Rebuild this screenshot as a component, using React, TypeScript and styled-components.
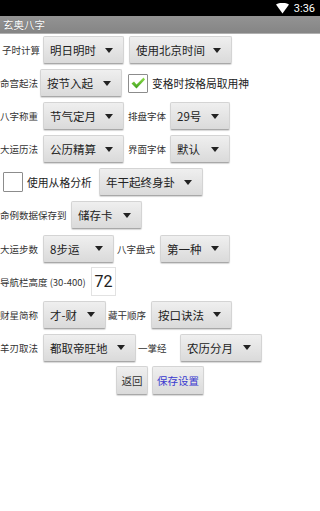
import React from "react";
import styled, { createGlobalStyle } from "styled-components";

const Global = createGlobalStyle`
  html, body { margin: 0; padding: 0; background: #fff; }
  body { font-family: Roboto, "Noto Sans CJK SC", "Noto Sans", sans-serif; width: 320px; height: 511px; overflow: hidden; }
`;

const Screen = styled.div`
  width: 320px;
  height: 511px;
  display: flex;
  flex-direction: column;
  background: #fff;
`;

const StatusBar = styled.div`
  height: 16px;
  background: #000;
  display: flex;
  align-items: center;
  justify-content: flex-end;
  gap: 5px;
  padding-right: 5px;
  color: #fff;
  font-size: 11px;
  font-family: Roboto, sans-serif;
`;

const TitleBar = styled.div`
  height: 17px;
  background: linear-gradient(#939393, #858585);
  color: #fff;
  font-size: 10.5px;
  line-height: 17px;
  padding-left: 3px;
  font-family: "Noto Sans CJK SC", sans-serif;
  text-shadow: 0 0 1px rgba(0,0,0,0.4);
  border-bottom: 1px solid #b0b0b0;
`;

const Content = styled.div`
  display: flex;
  flex-direction: column;
  gap: 5.1px;
  padding-top: 2px;
`;

const Row = styled.div<{ $center?: boolean }>`
  height: 28px;
  display: flex;
  align-items: center;
  justify-content: ${(p) => (p.$center ? "center" : "flex-start")};
  gap: ${(p) => (p.$center ? "4px" : "0")};
`;

const Label = styled.span<{ $w: number; $ml?: number }>`
  width: ${(p) => p.$w}px;
  margin-left: ${(p) => p.$ml ?? 0}px;
  flex: none;
  font-size: 9.5px;
  color: #333;
  white-space: nowrap;
  font-family: "Noto Sans CJK SC", sans-serif;
`;

const CheckText = styled.span<{ $w?: number; $ml?: number }>`
  width: ${(p) => (p.$w ? `${p.$w}px` : "auto")};
  margin-left: ${(p) => p.$ml ?? 0}px;
  flex: none;
  font-size: 10.8px;
  color: #222;
  white-space: nowrap;
  font-family: "Noto Sans CJK SC", sans-serif;
`;

const SpinnerBox = styled.div<{ $w: number; $ml?: number }>`
  width: ${(p) => p.$w}px;
  margin-left: ${(p) => p.$ml ?? 0}px;
  height: 28px;
  box-sizing: border-box;
  flex: none;
  display: flex;
  align-items: center;
  justify-content: space-between;
  padding: 0 10px 0 6px;
  background: linear-gradient(#efefef, #dadada);
  border: 1px solid #d4d4d4;
  border-bottom-color: #a8a8a8;
  border-radius: 2px;
  box-shadow: 0 1px 1px rgba(0, 0, 0, 0.16);
  font-size: 11.5px;
  color: #222;
  font-family: "Noto Sans CJK SC", sans-serif;
  white-space: nowrap;
`;

const Arrow = styled.span`
  width: 0;
  height: 0;
  border-left: 4.5px solid transparent;
  border-right: 4.5px solid transparent;
  border-top: 5px solid #222;
  flex: none;
`;

const Box = styled.div<{ $ml?: number; $h?: number }>`
  width: 20px;
  height: ${(p) => p.$h ?? 20}px;
  margin-left: ${(p) => p.$ml ?? 0}px;
  box-sizing: border-box;
  flex: none;
  border: 1px solid #8c8c8c;
  border-radius: 1px;
  background: #fff;
  display: flex;
  align-items: center;
  justify-content: center;
`;

const NumInput = styled.div`
  width: 25px;
  height: 29px;
  box-sizing: border-box;
  flex: none;
  border: 1px solid #e2e2e2;
  display: flex;
  align-items: center;
  justify-content: center;
  font-size: 16px;
  color: #222;
  font-family: Roboto, sans-serif;
`;

const Button = styled.div<{ $w: number; $blue?: boolean }>`
  width: ${(p) => p.$w}px;
  height: 29px;
  box-sizing: border-box;
  display: flex;
  align-items: center;
  justify-content: center;
  background: linear-gradient(#efefef, #dadada);
  border: 1px solid #d4d4d4;
  border-bottom-color: #a8a8a8;
  border-radius: 2px;
  box-shadow: 0 1px 1px rgba(0, 0, 0, 0.16);
  font-size: 10.5px;
  color: ${(p) => (p.$blue ? "#3a3ad0" : "#333")};
  font-family: "Noto Sans CJK SC", sans-serif;
`;

const Spinner = ({ w, ml, children }: { w: number; ml?: number; children: React.ReactNode }) => (
  <SpinnerBox $w={w} $ml={ml}>
    <span>{children}</span>
    <Arrow />
  </SpinnerBox>
);

const Check = () => (
  <svg width="16" height="14" viewBox="0 0 16 14">
    <defs>
      <linearGradient id="g" x1="0" y1="0" x2="0" y2="1">
        <stop offset="0" stopColor="#8ee04a" />
        <stop offset="1" stopColor="#3f9e1e" />
      </linearGradient>
    </defs>
    <path d="M1.5 7.5 L4 5.5 L6.5 8.5 L13.5 1.5 L15 3.5 L6.5 12.5 Z" fill="url(#g)" />
  </svg>
);

const Wifi = () => (
  <svg width="13" height="11" viewBox="0 0 13 11">
    <path d="M0 1.5 Q6.5 -2 13 1.5 L6.5 10.5 Z" fill="#fff" />
  </svg>
);

export default function App() {
  return (
    <>
      <Global />
      <Screen>
        <StatusBar>
          <Wifi />
          <span>3:36</span>
        </StatusBar>
        <TitleBar>玄奥八字</TitleBar>
        <Content>
          <Row>
            <Label $w={41} $ml={2}>子时计算</Label>
            <Spinner w={81}>明日明时</Spinner>
            <Spinner w={103} ml={5}>使用北京时间</Spinner>
          </Row>
          <Row>
            <Label $w={40}>命宫起法</Label>
            <Spinner w={82}>按节入起</Spinner>
            <Box $ml={6} $h={19}><Check /></Box>
            <CheckText $ml={4}>变格时按格局取用神</CheckText>
          </Row>
          <Row>
            <Label $w={43}>八字称重</Label>
            <Spinner w={81}>节气定月</Spinner>
            <Label $w={42} $ml={4}>排盘字体</Label>
            <Spinner w={60}>29号</Spinner>
          </Row>
          <Row>
            <Label $w={43}>大运历法</Label>
            <Spinner w={81}>公历精算</Spinner>
            <Label $w={42} $ml={4}>界面字体</Label>
            <Spinner w={60}>默认</Spinner>
          </Row>
          <Row>
            <Box $ml={3} />
            <CheckText $ml={4} $w={72}>使用从格分析</CheckText>
            <Spinner w={104}>年干起终身卦</Spinner>
          </Row>
          <Row>
            <Label $w={71}>命例数据保存到</Label>
            <Spinner w={71}>储存卡</Spinner>
          </Row>
          <Row>
            <Label $w={43}>大运步数</Label>
            <Spinner w={71}>8步运</Spinner>
            <Label $w={43} $ml={3}>八字盘式</Label>
            <Spinner w={70}>第一种</Spinner>
          </Row>
          <Row>
            <Label $w={91}>导航栏高度 (30-400)</Label>
            <NumInput>72</NumInput>
          </Row>
          <Row>
            <Label $w={43}>财星简称</Label>
            <Spinner w={63}>才-财</Spinner>
            <Label $w={43} $ml={2}>藏干顺序</Label>
            <Spinner w={81}>按口诀法</Spinner>
          </Row>
          <Row>
            <Label $w={43}>羊刃取法</Label>
            <Spinner w={93}>都取帝旺地</Spinner>
            <Label $w={42} $ml={2}>一掌经</Label>
            <Spinner w={82}>农历分月</Spinner>
          </Row>
          <Row $center>
            <Button $w={32}>返回</Button>
            <Button $w={52} $blue>保存设置</Button>
          </Row>
        </Content>
      </Screen>
    </>
  );
}
